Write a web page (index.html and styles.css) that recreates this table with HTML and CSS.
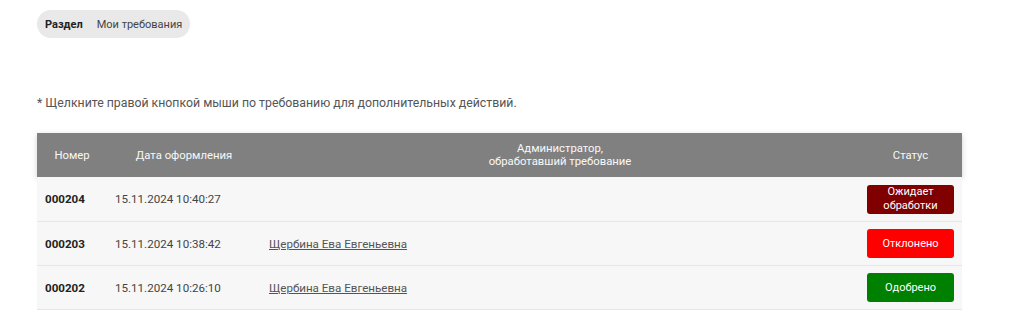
FILE: index.html
```html
<!DOCTYPE html>
<html lang="ru">
<head>
<meta charset="utf-8">
<link rel="stylesheet" href="styles.css">
</head>
<body>
<div class="page">
  <div class="crumbs">
    <span class="crumb-section">Раздел</span>
    <span class="crumb-current">Мои требования</span>
  </div>
  <p class="note">* Щелкните правой кнопкой мыши по требованию для дополнительных действий.</p>
  <table class="grid">
    <colgroup>
      <col class="c-num"><col class="c-date"><col class="c-admin"><col class="c-status">
    </colgroup>
    <thead>
      <tr>
        <th>Номер</th>
        <th>Дата оформления</th>
        <th>Администратор,<br>обработавший требование</th>
        <th>Статус</th>
      </tr>
    </thead>
    <tbody>
      <tr>
        <td class="num">000204</td>
        <td>15.11.2024 10:40:27</td>
        <td></td>
        <td class="st"><span class="badge wait">Ожидает<br>обработки</span></td>
      </tr>
      <tr>
        <td class="num">000203</td>
        <td>15.11.2024 10:38:42</td>
        <td><a class="admin" href="#">Щербина Ева Евгеньевна</a></td>
        <td class="st"><span class="badge rej">Отклонено</span></td>
      </tr>
      <tr>
        <td class="num">000202</td>
        <td>15.11.2024 10:26:10</td>
        <td><a class="admin" href="#">Щербина Ева Евгеньевна</a></td>
        <td class="st"><span class="badge ok">Одобрено</span></td>
      </tr>
    </tbody>
  </table>
</div>
</body>
</html>
```

FILE: styles.css
```css
html, body {
  margin: 0;
  padding: 0;
  background: #fff;
}
body {
  font-family: Roboto, "Liberation Sans", Arial, sans-serif;
  color: #333;
}
.page {
  padding: 10px 62px 0 37px;
}
.crumbs {
  display: inline-flex;
  align-items: center;
  gap: 14px;
  height: 28px;
  padding: 0 8px;
  background: #e9e9e9;
  border-radius: 14px;
  font-size: 11px;
}
.crumb-section {
  font-weight: 700;
  color: #222;
}
.crumb-current {
  color: #444;
}
.note {
  margin: 58px 0 0;
  font-size: 12.3px;
  line-height: 14px;
  color: #555;
}
.grid {
  margin-top: 23px;
  width: 925px;
  border-collapse: collapse;
  table-layout: fixed;
  font-size: 11.6px;
}
.c-num { width: 70px; }
.c-date { width: 154px; }
.c-admin { width: 598px; }
.c-status { width: 103px; }
.grid thead tr {
  background: #808080;
  box-shadow: 0 2px 6px rgba(0,0,0,0.18);
}
.grid th {
  height: 44px;
  padding: 0 8px;
  color: #f8f8f8;
  font-weight: 400;
  font-size: 11.3px;
  line-height: 13px;
  text-align: center;
}
.grid td {
  height: 43px;
  padding: 0 8px;
  background: #f7f7f7;
  border-bottom: 1px solid #e6e6e6;
  color: #444;
  vertical-align: middle;
}
.grid tbody tr:first-child td {
  height: 44px;
}
.grid td.num {
  font-weight: 700;
  color: #222;
}
.admin {
  color: #555;
  text-decoration: underline;
}
.st {
  text-align: center;
}
.badge {
  display: flex;
  align-items: center;
  justify-content: center;
  height: 29px;
  border-radius: 3px;
  color: #fff;
  font-size: 11px;
  line-height: 14px;
  text-align: center;
}
.wait { background: #800000; }
.rej { background: #ff0000; }
.ok { background: #008000; }
```
